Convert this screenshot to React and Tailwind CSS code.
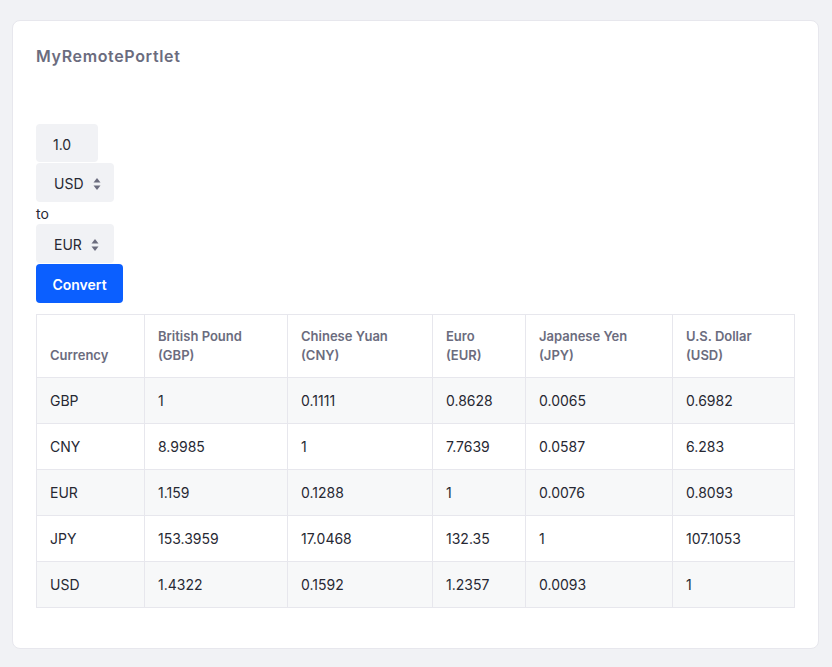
import React from 'react';

const headers = [
  ['Currency'],
  ['British Pound', '(GBP)'],
  ['Chinese Yuan', '(CNY)'],
  ['Euro', '(EUR)'],
  ['Japanese Yen', '(JPY)'],
  ['U.S. Dollar', '(USD)'],
];

const rows = [
  ['GBP', '1', '0.1111', '0.8628', '0.0065', '0.6982'],
  ['CNY', '8.9985', '1', '7.7639', '0.0587', '6.283'],
  ['EUR', '1.159', '0.1288', '1', '0.0076', '0.8093'],
  ['JPY', '153.3959', '17.0468', '132.35', '1', '107.1053'],
  ['USD', '1.4322', '0.1592', '1.2357', '0.0093', '1'],
];

const widths = ['w-[108px]', 'w-[143px]', 'w-[145px]', 'w-[93px]', 'w-[147px]', 'w-[122px]'];

const Caret = () => (
  <svg width="8" height="14" viewBox="0 0 8 14" className="ml-[9px]">
    <path d="M4 1 L7.5 5.5 H0.5 Z" fill="#6b6c7e" />
    <path d="M4 13 L7.5 8.5 H0.5 Z" fill="#6b6c7e" />
  </svg>
);

const Select = ({ value }) => (
  <div className="flex h-[39px] w-[78px] items-center rounded-[4px] bg-[#f1f2f5] pl-[18px] pt-[2px] text-[14px] text-[#272833]">
    <span>{value}</span>
    <Caret />
  </div>
);

export default function App() {
  return (
    <div className="min-h-[667px] bg-[#f1f2f5] px-[12px] pt-[20px] font-['Inter',sans-serif]">
      <div className="h-[629px] w-[807px] rounded-[8px] border border-[#e7e7ed] bg-white px-[23px] pt-[23px]">
        <h2 className="text-[16px] font-semibold leading-[24px] tracking-[0.65px] text-[#6b6c7e]">MyRemotePortlet</h2>

        <div className="mt-[56px] flex flex-col items-start">
          <div className="flex h-[38px] w-[62px] items-center rounded-[4px] bg-[#f1f2f5] pl-[17px] pt-[2px] text-[14px] text-[#272833]">1.0</div>
          <div className="mt-[1px]">
            <Select value="USD" />
          </div>
          <div className="h-[22px] pt-[1px] text-[14px] leading-[22px] text-[#272833]">to</div>
          <Select value="EUR" />
          <button className="mt-[1px] h-[39px] w-[87px] rounded-[4px] bg-[#0b5fff] pt-[1px] text-[14px] font-semibold text-white">Convert</button>
        </div>

        <table className="mt-[11px] border-collapse text-[14px]">
          <thead>
            <tr>
              {headers.map((h, i) => (
                <th
                  key={i}
                  className={`${widths[i]} h-[63px] border border-[#e7e7ed] px-[13px] pb-[12px] align-bottom text-left text-[13px] font-semibold leading-[19px] text-[#6b6c7e]`}
                >
                  {h.map((line, j) => (
                    <div key={j}>{line}</div>
                  ))}
                </th>
              ))}
            </tr>
          </thead>
          <tbody>
            {rows.map((r, i) => (
              <tr key={i} className={i % 2 === 0 ? 'bg-[#f7f8f9]' : 'bg-white'}>
                {r.map((c, j) => (
                  <td key={j} className="h-[46px] border border-[#e7e7ed] px-[13px] align-middle text-[#272833]">
                    {c}
                  </td>
                ))}
              </tr>
            ))}
          </tbody>
        </table>
      </div>
    </div>
  );
}
